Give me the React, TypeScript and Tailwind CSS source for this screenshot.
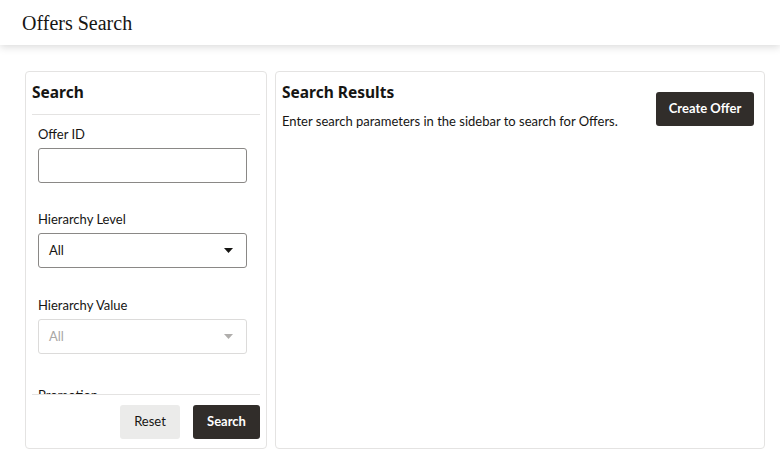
import React from "react";

const Caret = ({ muted }: { muted?: boolean }) => (
  <svg width="9" height="5" viewBox="0 0 9 5" className="shrink-0">
    <path d="M0 0h9L4.5 5z" fill={muted ? "#b0aeac" : "#161513"} />
  </svg>
);

const SelectBox = ({ value, disabled }: { value: string; disabled?: boolean }) => (
  <div
    className={
      disabled
        ? "flex h-[35px] items-center justify-between rounded-[3px] border border-[#dcdbda] pl-[10px] pr-[13px] text-[13px] text-[#a9a7a5]"
        : "flex h-[35px] items-center justify-between rounded-[3px] border border-[#8a8886] pl-[10px] pr-[13px] text-[13px] text-[#161513]"
    }
  >
    <span>{value}</span>
    <Caret muted={disabled} />
  </div>
);

const App: React.FC = () => {
  return (
    <div className="h-[463px] w-full overflow-hidden bg-white font-['Lato',sans-serif] text-[#161513]">
      {/* page header */}
      <div className="relative z-10 flex h-[45px] items-center px-[22px] shadow-[0_2px_8px_rgba(0,0,0,0.15)]">
        <h1 className="font-['Liberation_Serif',serif] text-[20px] leading-none text-[#161513]">
          Offers Search
        </h1>
      </div>

      <div className="flex gap-[8px] pl-[25px] pr-[15px] pt-[26px]">
        {/* sidebar */}
        <div className="flex h-[378px] w-[242px] flex-col rounded-[4px] border border-[#e4e3e2]">
          <div className="mx-[6px] border-b border-[#e4e3e2] pb-[10px] pt-[8px]">
            <h2 className="font-['Noto_Sans',sans-serif] text-[15.5px] font-bold leading-[24px]">Search</h2>
          </div>

          <div className="flex-1 overflow-hidden pl-[12px] pr-[19px] pt-[10px]">
            <label className="block text-[13px] leading-[18px]">Offer ID</label>
            <div className="mt-[5px] h-[35px] rounded-[3px] border border-[#8a8886]" />

            <label className="mt-[27px] block text-[13px] leading-[18px]">Hierarchy Level</label>
            <div className="mt-[5px]">
              <SelectBox value="All" />
            </div>

            <label className="mt-[28px] block text-[13px] leading-[18px]">Hierarchy Value</label>
            <div className="mt-[5px]">
              <SelectBox value="All" disabled />
            </div>

            <label className="mt-[32px] block text-[13px] leading-[18px]">Promotion</label>
          </div>

          <div className="mx-[6px] flex justify-end gap-[13px] border-t border-[#e4e3e2] pb-[9px] pt-[10px]">
            <button className="h-[34px] w-[60px] rounded-[3px] bg-[#ebebea] text-[13px] text-[#161513]">
              Reset
            </button>
            <button className="h-[34px] w-[67px] rounded-[3px] bg-[#312d2a] text-[13px] font-bold text-white">
              Search
            </button>
          </div>
        </div>

        {/* results */}
        <div className="flex h-[378px] flex-1 items-start justify-between rounded-[4px] border border-[#e4e3e2] pl-[6px] pr-[10px] pt-[8px]">
          <div>
            <h2 className="font-['Noto_Sans',sans-serif] text-[15.5px] font-bold leading-[24px]">Search Results</h2>
            <p className="mt-[8px] text-[13px] leading-[18px]">
              Enter search parameters in the sidebar to search for Offers.
            </p>
          </div>
          <button className="mt-[12px] h-[34px] w-[98px] rounded-[3px] bg-[#312d2a] text-[13px] font-bold text-white">
            Create Offer
          </button>
        </div>
      </div>
    </div>
  );
};

export default App;
